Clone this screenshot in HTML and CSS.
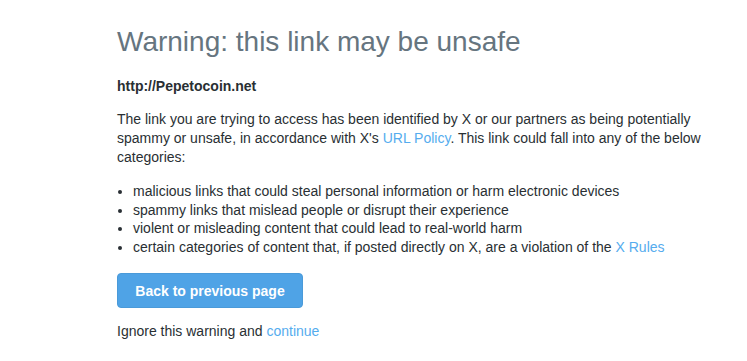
FILE: index.html
```html
<!DOCTYPE html>
<html lang="en">

<head>
  <meta charset="UTF-8">
  <meta name="viewport" content="width=device-width, initial-scale=1.0">
  <title>Warning: this link may be unsafe</title>
  <link rel="stylesheet" href="styles.css">
</head>

<body>
  <div class="warning">
    <h1 class="title">Warning: this link may be unsafe</h1>
    <p class="url">http://Pepetocoin.net</p>
    <p class="intro">
      The link you are trying to access has been identified by X or our partners as being potentially
      spammy or unsafe, in accordance with X's <a href="#">URL Policy</a>. This link could fall into any of the below
      categories:
    </p>
    <ul class="reasons">
      <li>malicious links that could steal personal information or harm electronic devices</li>
      <li>spammy links that mislead people or disrupt their experience</li>
      <li>violent or misleading content that could lead to real-world harm</li>
      <li>certain categories of content that, if posted directly on X, are a violation of the <a href="#">X Rules</a></li>
    </ul>
    <button class="back">Back to previous page</button>
    <p class="ignore">Ignore this warning and <a href="#">continue</a></p>
  </div>
</body>

</html>
```

FILE: styles.css
```css
* {
  margin: 0;
  padding: 0;
  box-sizing: border-box;
}

body {
  background-color: #ffffff;
  color: #292f33;
  font-family: "Liberation Sans", Arial, sans-serif;
  font-size: 14px;
  line-height: 19px;
}

a {
  color: #55acee;
  text-decoration: none;
}

.warning {
  width: 600px;
  margin-left: 117px;
  padding-top: 24px;
}

.title {
  color: #66757f;
  font-size: 28px;
  font-weight: normal;
  line-height: 36px;
  margin-bottom: 17px;
}

.url {
  font-weight: bold;
  margin-bottom: 14px;
}

.intro {
  margin-bottom: 15px;
}

.reasons {
  list-style: disc;
  padding-left: 16px;
  line-height: 18.5px;
  margin-bottom: 17px;
}

.back {
  display: block;
  background-color: #4fa3e6;
  color: #ffffff;
  border: 1px solid #4a9ad9;
  border-radius: 4px;
  width: 186px;
  height: 35px;
  font-family: inherit;
  font-size: 14px;
  font-weight: bold;
  cursor: pointer;
  margin-bottom: 14px;
}

.ignore {
  margin-bottom: 20px;
}
```
